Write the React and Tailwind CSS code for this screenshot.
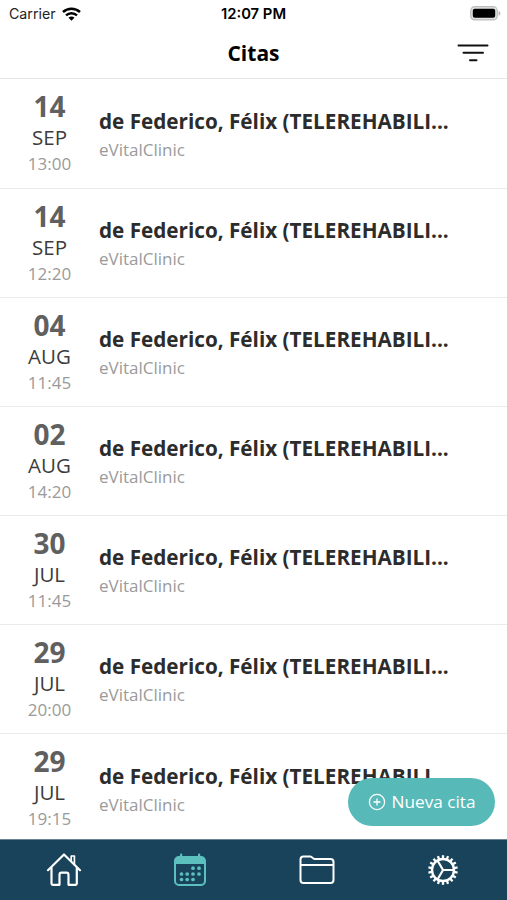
const appointments = [
  { day: '14', month: 'SEP', time: '13:00' },
  { day: '14', month: 'SEP', time: '12:20' },
  { day: '04', month: 'AUG', time: '11:45' },
  { day: '02', month: 'AUG', time: '14:20' },
  { day: '30', month: 'JUL', time: '11:45' },
  { day: '29', month: 'JUL', time: '20:00' },
  { day: '29', month: 'JUL', time: '19:15' },
]

const gearTeeth = Array.from({ length: 18 }, (_, i) => i * 20)

function StatusBar() {
  return (
    <div className="grid h-7 grid-cols-[1fr_auto_1fr] items-center pr-[9px] pl-[9px] font-['Inter',sans-serif] text-[14px] text-[#222]">
      <div className="flex items-center gap-[6px]">
        <span className="text-[14.2px]">Carrier</span>
        <svg width="19" height="14" viewBox="0 0 19 14" fill="none" stroke="#000" strokeWidth="2.5">
          <path d="M1 5C5.8 .6 13.2 .6 18 5" />
          <path d="M4 8.4c3.1-2.9 7.9-2.9 11 0" />
          <path d="M9.5 13.8 6.5 10.7c1.7-1.5 4.3-1.5 6 0z" fill="#000" stroke="none" />
        </svg>
      </div>
      <span className="text-center text-[14.8px] font-semibold whitespace-nowrap text-black">12:07 PM</span>
      <svg className="-mt-px -mr-[3px] justify-self-end" width="31" height="15" viewBox="0 0 31 15">
        <rect x=".7" y=".7" width="26.6" height="13.2" rx="4" fill="#e0e0e0" stroke="#bdbdbd" strokeWidth="1.2" />
        <rect x="2.8" y="2.8" width="22.4" height="9" rx="2" fill="#000" />
        <path d="M28.6 5v4.8c1-.3 1.8-1.3 1.8-2.4S29.6 5.3 28.6 5z" fill="#b5b5b5" />
      </svg>
    </div>
  )
}

function Header() {
  return (
    <header className="relative flex h-[51px] items-center justify-center border-b border-[#e6e6e6]">
      <h1 className="text-[21px] leading-[30px] font-bold text-black">Citas</h1>
      <button className="absolute top-[15px] right-[18px]" aria-label="Filtrar">
        <svg width="32" height="20" viewBox="0 0 32 20" stroke="#111" strokeWidth="2" strokeLinecap="round">
          <path d="M1.5 2.5h29M6.5 9.7h19.5M13 17.2h6.5" />
        </svg>
      </button>
    </header>
  )
}

function AppointmentRow({ day, month, time }) {
  return (
    <li className="flex h-[109.15px] shrink-0 border-b border-[#ebebeb]">
      <div className="flex w-[99px] flex-col items-center pt-[11px]">
        <span className="text-[28px] leading-8 font-bold text-[#606060]">{day}</span>
        <span className="pt-px text-[20.5px] leading-[29px] text-[#3c3c3c]">{month}</span>
        <span className="text-[17px] leading-[23px] text-[#9a9a9a]">{time}</span>
      </div>
      <div className="flex flex-col pt-[26.4px] whitespace-nowrap">
        <span className="text-[20.7px] leading-[30px] font-bold text-[#2c2c2c]">
          de Federico, Félix (TELEREHABILI...
        </span>
        <span className="text-[17px] leading-[27px] text-[#9a9a9a]">eVitalClinic</span>
      </div>
    </li>
  )
}

function HomeIcon() {
  return (
    <svg width="36" height="34" viewBox="0 0 36 34" fill="none" stroke="#fff" strokeWidth="2.2" strokeLinecap="round" strokeLinejoin="round">
      <path d="M2 17.2 18 1.5l16 15.7" />
      <path d="M5.5 15v15.5c0 .9.5 1.3 1.3 1.3h6.7V22c0-1.500.7-2.300 2-2.300h5c1.300 0 2 .8 2 2.300v9.800h7c.8 0 1.300-.4 1.300-1.300V15" />
      <path d="M25.200 8V3h3.200v8.500" strokeWidth="1.7" />
    </svg>
  )
}

function CalendarIcon() {
  return (
    <svg width="34" height="34" viewBox="0 0 34 34" fill="#5cc0be">
      <rect x="2" y="4" width="30" height="28" rx="4" fill="none" stroke="#5cc0be" strokeWidth="2" />
      <path d="M2 7c0-2.200 1.500-3.500 3.500-3.500h23c2 0 3.500 1.300 3.500 3.500v4H2z" />
      <rect x="7" y=".5" width="2.2" height="4" rx="1" />
      <rect x="25" y=".5" width="2.2" height="4" rx="1" />
      {[20, 26].map((x) => <circle key={x} cx={x} cy="15.2" r="1.85" />)}
      {[8.5, 14.2, 20, 26].map((x) => <circle key={x} cx={x} cy="21" r="1.85" />)}
      {[8.5, 14.2, 20].map((x) => <circle key={x} cx={x} cy="26.5" r="1.85" />)}
    </svg>
  )
}

function FolderIcon() {
  return (
    <svg width="36" height="30" viewBox="0 0 36 30" fill="none" stroke="#fff" strokeWidth="2" strokeLinejoin="round">
      <path d="M1.5 25V4.5c0-2 1-3 3-3h7c1.600 0 2.200 2.500 4 2.500h16c2 0 3 1 3 3v18c0 2-1 3-3 3h-27c-2 0-3-1-3-3z" />
      <path d="M1.5 10h33" />
    </svg>
  )
}

function GearIcon() {
  return (
    <svg width="32" height="32" viewBox="0 0 32 32" fill="none" stroke="#fff" strokeWidth="2.2">
      <circle cx="16" cy="16" r="11" strokeWidth="2.4" />
      {gearTeeth.map((angle) => (
        <path key={angle} d="M16 1.2v3.5" strokeWidth="2.3" transform={`rotate(${angle} 16 16)`} />
      ))}
      <path d="M16 16h11M16 16l-5.500-9.500M16 16l-5.500 9.500" />
    </svg>
  )
}

function TabBar() {
  return (
    <nav className="grid h-[61px] shrink-0 grid-cols-4 place-items-center border-t border-[#688293] bg-[#18435a] px-px">
      <HomeIcon />
      <CalendarIcon />
      <FolderIcon />
      <GearIcon />
    </nav>
  )
}

export default function App() {
  return (
    <div className="relative flex h-[900px] w-[507px] flex-col overflow-hidden bg-white font-['Open_Sans',sans-serif]">
      <StatusBar />
      <Header />
      <ul className="flex min-h-0 flex-1 flex-col overflow-hidden pt-[0.4px]">
        {appointments.map((item, i) => (
          <AppointmentRow key={i} {...item} />
        ))}
      </ul>
      <TabBar />
      <button className="absolute right-[12px] bottom-[74px] flex h-[48px] w-[147px] items-center justify-center gap-[6px] rounded-full bg-[#57bab9] text-[17.2px] whitespace-nowrap text-white">
        <svg width="18" height="18" viewBox="0 0 18 18" fill="none" stroke="#fff" strokeWidth="1.3">
          <circle cx="9" cy="9" r="7.6" />
          <path d="M9 5.5v7M5.5 9h7" />
        </svg>
        Nueva cita
      </button>
    </div>
  )
}
